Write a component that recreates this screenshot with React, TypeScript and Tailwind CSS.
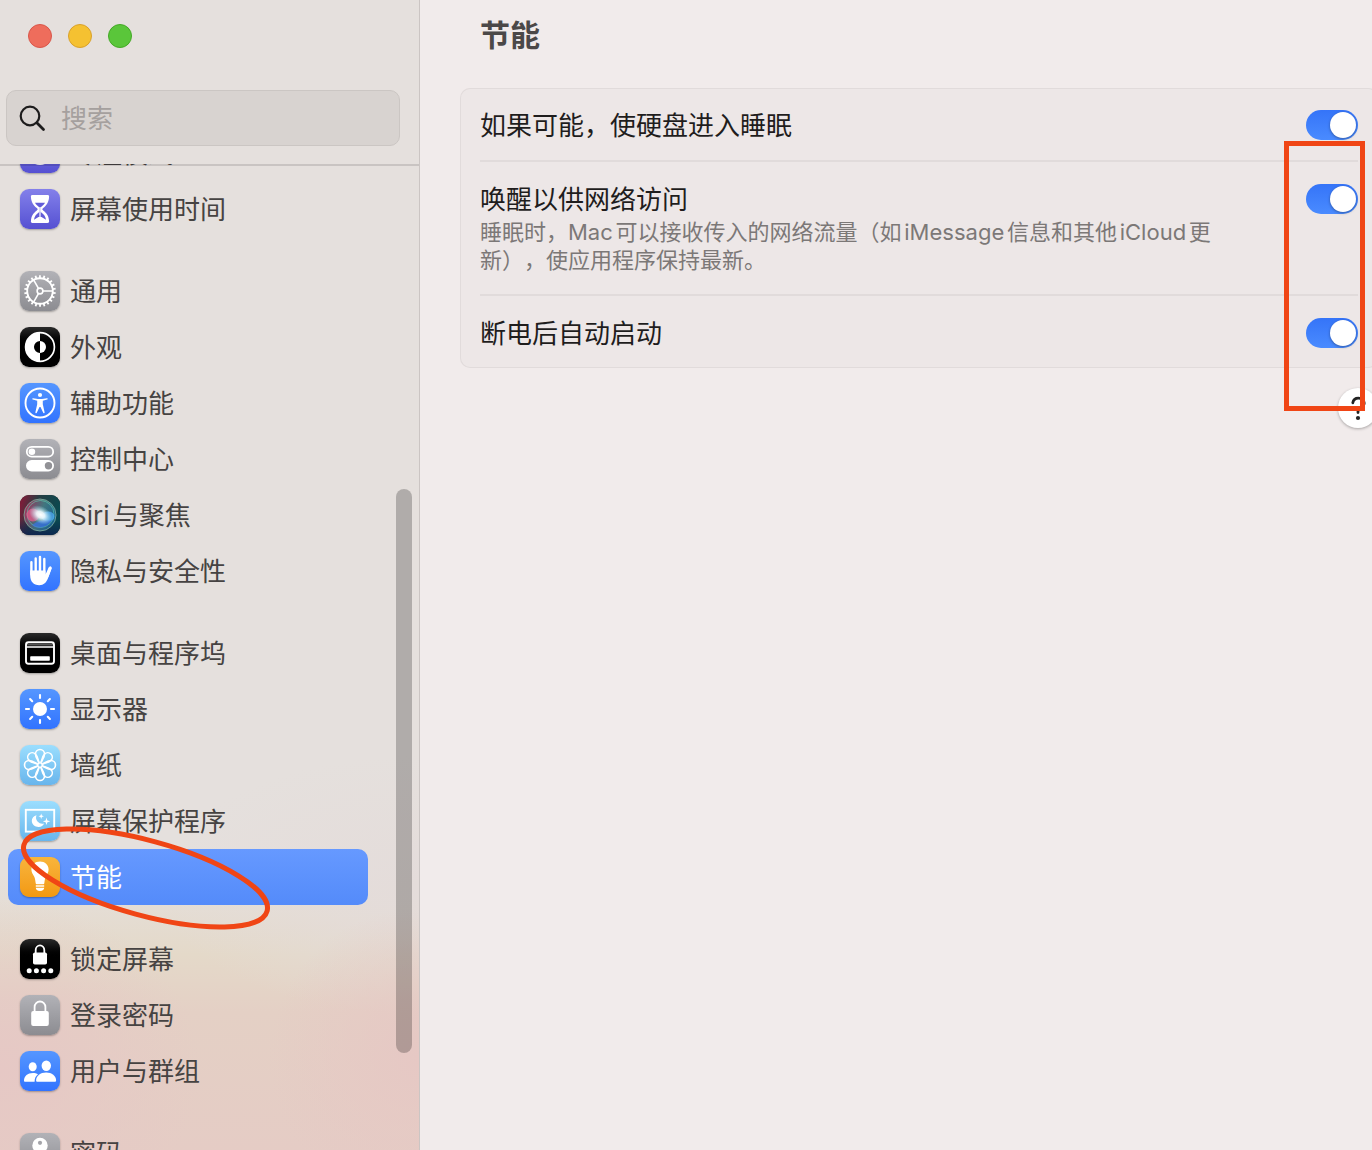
import { useState, type ReactNode } from "react";

type NavItem = {
  label: string;
  tile: string;
  icon: ReactNode;
};

const GRAY = "bg-linear-to-b from-[#b2b2b7] to-[#8c8c91]";
const BLACK = "bg-linear-to-b from-[#2b2b2b] to-black to-50%";
const BLUE = "bg-linear-to-b from-[#5596ff] to-[#3273ff]";
const SKY = "bg-linear-to-b from-[#9bdefe] to-[#68b5ec]";
const INDIGO = "bg-linear-to-b from-[#8480ea] to-[#5650d2]";
const ORANGE = "bg-linear-to-b from-[#f8b53b] to-[#f3990e]";

const spokes = (count: number) => Array.from({ length: count }, (_, i) => (i * 360) / count);

function Glyph({ children }: { children: ReactNode }) {
  return (
    <svg viewBox="0 0 40 40" className="size-10" fill="none" aria-hidden="true">
      {children}
    </svg>
  );
}

const MoonIcon = (
  <Glyph>
    <circle cx="20" cy="20" r="12" fill="white" />
  </Glyph>
);

const HourglassIcon = (
  <Glyph>
    <path
      d="M12.500 6h15c1.100 0 1.700.7 1.600 1.700-.3 5.300-2.200 8.300-5.900 11.300-1.200 1-1.200 1.500 0 2.500 3.700 3 5.600 5.500 5.900 10.800.1 1-.5 1.700-1.600 1.700h-15c-1.100 0-1.700-.7-1.600-1.700.3-5.300 2.200-7.800 5.900-10.800 1.200-1 1.200-1.500 0-2.500-3.700-3-5.600-6-5.900-11.300-.1-1 .5-1.700 1.600-1.700z"
      fill="white"
    />
    <path d="M15 13.700h10c-.9 1.600-2.200 2.900-4.200 4.500-.5.400-.5 4.400 0 4.800 3 2.200 4.600 4.200 5.200 7.700l-4.500-2.800h-3l-4.500 2.800c.6-3.500 2.200-5.500 5.200-7.700.5-.4.500-4.400 0-4.800-2-1.600-3.300-2.900-4.200-4.500z" fill="#625cd8" />
    <path d="M20 18v10" stroke="white" strokeWidth="1.200" />
  </Glyph>
);

const GearIcon = (
  <Glyph>
    <g stroke="white">
      <circle cx="20" cy="20" r="12.800" strokeWidth="1.900" />
      <circle cx="20" cy="20" r="2.900" strokeWidth="1.600" />
      {spokes(3).map((a) => (
        <path key={a} d="M22.800 20H32.500" strokeWidth="1.600" transform={`rotate(${a} 20 20)`} />
      ))}
      {spokes(22).map((a) => (
        <path key={a} d="M33 20h2.800" strokeWidth="1.800" transform={`rotate(${a + 8} 20 20)`} />
      ))}
    </g>
  </Glyph>
);

const AppearanceIcon = (
  <Glyph>
    <circle cx="20" cy="20" r="14.400" stroke="white" strokeWidth="1.700" />
    <path d="M20 5.500a14.500 14.500 0 0 0 0 29v-8.500a6 6 0 0 1 0-12z" fill="white" />
    <path d="M20 14a6 6 0 0 1 0 12z" fill="white" />
  </Glyph>
);

const AccessibilityIcon = (
  <Glyph>
    <circle cx="20" cy="20" r="14.500" stroke="white" strokeWidth="1.900" />
    <circle cx="20" cy="12" r="2.100" fill="white" />
    <path
      d="M13 15.200l5 .8h4l5-.8c.9-.1 1.100 1.200.2 1.400l-4.400 1.100v3.500l1.800 8c.2 1-1.200 1.400-1.500.4L20.500 24h-1l-2.600 5.600c-.3 1-1.700.6-1.500-.4l1.800-8v-3.500l-4.400-1.100c-.9-.2-.7-1.500.2-1.400z"
      fill="white"
    />
  </Glyph>
);

const ControlCenterIcon = (
  <Glyph>
    <rect x="6.800" y="7.800" width="26.400" height="9.800" rx="4.900" stroke="white" strokeWidth="1.800" />
    <circle cx="11.900" cy="12.700" r="3.300" fill="white" />
    <rect x="6" y="21" width="28" height="11.500" rx="5.700" fill="white" />
    <circle cx="28.500" cy="26.700" r="3.700" fill="#919196" />
  </Glyph>
);

const SiriIcon = (
  <Glyph>
    <defs>
      <linearGradient id="siri-bg" x1="0" y1="0" x2="1" y2="0.300">
        <stop offset="0" stopColor="#8e1737" />
        <stop offset="0.450" stopColor="#263c42" />
        <stop offset="1" stopColor="#0b4a50" />
      </linearGradient>
      <linearGradient id="siri-low" x1="0" y1="0" x2="0" y2="1">
        <stop offset="0.600" stopColor="#0b1f50" stopOpacity="0" />
        <stop offset="1" stopColor="#0b1f50" stopOpacity="0.800" />
      </linearGradient>
      <linearGradient id="siri-orb" x1="0" y1="0.300" x2="1" y2="0.700">
        <stop offset="0" stopColor="#d8346e" />
        <stop offset="0.500" stopColor="#5a9aa4" />
        <stop offset="1" stopColor="#1c72b8" />
      </linearGradient>
      <radialGradient id="siri-core">
        <stop offset="0" stopColor="#fff" />
        <stop offset="0.350" stopColor="#f2fdff" stopOpacity="0.900" />
        <stop offset="1" stopColor="#9fe4f4" stopOpacity="0" />
      </radialGradient>
    </defs>
    <rect width="40" height="40" fill="url(#siri-bg)" />
    <rect width="40" height="40" fill="url(#siri-low)" />
    <circle cx="20" cy="20" r="16" fill="url(#siri-orb)" fillOpacity="0.600" stroke="#7fae9c" strokeOpacity="0.800" />
    <circle cx="20.500" cy="19" r="13.500" stroke="#5fd0b0" strokeOpacity="0.600" />
    <ellipse cx="13" cy="20" rx="6.500" ry="6.500" fill="#ee5c8c" fillOpacity="0.700" />
    <ellipse cx="28" cy="21.500" rx="6.500" ry="5" fill="#4fa9f0" fillOpacity="0.750" />
    <path d="M12 30c6 5 15 3 20-5-6 1-11-2-20 5z" fill="#3a72e6" fillOpacity="0.700" />
    <ellipse cx="20.500" cy="19.500" rx="12.500" ry="8.500" fill="url(#siri-core)" transform="rotate(30 20 20)" />
  </Glyph>
);

const HandIcon = (
  <Glyph>
    <g stroke="white" strokeWidth="2.400" strokeLinecap="round">
      <path d="M11.400 11.200v12M15.700 7.500v14M20 6v15M24.300 8v15" />
      <path d="M30.400 16.700l-3 8" strokeWidth="2.700" />
    </g>
    <path
      d="M10.200 19.500h15.300v4l3.400-7.500 2.800 1.200-3.400 9.300c-1.800 5-4.600 7.700-9 7.700-5.800 0-9.100-3.800-9.100-9.700z"
      fill="white"
    />
  </Glyph>
);

const DockIcon = (
  <Glyph>
    <rect x="6" y="9.200" width="28" height="21.600" rx="2.500" stroke="white" strokeWidth="1.900" />
    <path d="M6 14h28" stroke="white" strokeWidth="1.500" />
    <path d="M7 11.800h26" stroke="#555" strokeWidth="1.500" />
    <rect x="10.200" y="23.200" width="19.600" height="4.600" rx="0.800" fill="white" />
  </Glyph>
);

const DisplayIcon = (
  <Glyph>
    <circle cx="20" cy="20" r="7" fill="white" />
    <g stroke="white" strokeWidth="2.100" strokeLinecap="round">
      {spokes(8).map((a) => (
        <path key={a} d="M20 6v3" transform={`rotate(${a} 20 20)`} />
      ))}
    </g>
  </Glyph>
);

const WallpaperIcon = (
  <Glyph>
    <g stroke="white" strokeWidth="1.600">
      {spokes(8).map((a) => (
        <path
          key={a}
          d="M18.500 17.500c.4-2-3-4-3-8.500a4.500 4.500 0 0 1 9 0c0 4.500-3.400 6.500-3 8.500"
          transform={`rotate(${a} 20 20)`}
        />
      ))}
      <circle cx="20" cy="20" r="2.300" />
    </g>
  </Glyph>
);

const ScreenSaverIcon = (
  <Glyph>
    <rect x="5.800" y="8.800" width="28.400" height="21.800" stroke="white" strokeWidth="1.900" />
    <path
      d="M16.500 14.200a6.300 6.300 0 0 0 7.600 8.300 5.900 5.900 0 0 1-5.500 3.400c-3.700 0-6.800-2.500-6.800-6.200 0-2.600 1.900-4.900 4.700-5.500z"
      fill="white"
    />
    <path
      d="M21.200 12.500l.7 2 2 .7-2 .7-.7 2-.7-2-2-.7 2-.7zM26.500 16.500l.9 2.900 2.900.9-2.900.9-.9 2.900-.9-2.900-2.900-.9 2.900-.9z"
      fill="white"
    />
  </Glyph>
);

const BulbIcon = (
  <Glyph>
    <path
      d="M20 4.500c-4.900 0-8.600 3.300-8.600 7.900 0 2.800 1.500 4.800 2.600 6.800s1.300 4.600 1.700 7c.2.700.5 1 1.200 1h6.200c.7 0 1-.3 1.200-1 .4-2.400.6-5 1.700-7s2.600-4 2.600-6.800c0-4.600-3.700-7.900-8.600-7.900z"
      fill="white"
    />
    <path d="M15.800 28.200h8.400v1.500h-8.400zM15.800 30.700h8.400c0 1.900-1.500 3.300-4.200 3.300s-4.200-1.400-4.200-3.300z" fill="white" />
  </Glyph>
);

const LockScreenIcon = (
  <Glyph>
    <path d="M15.700 14v-3a4.300 4.600 0 0 1 8.600 0v3" stroke="white" strokeWidth="1.800" />
    <rect x="13" y="13.500" width="14" height="12" rx="1.800" fill="white" />
    {[9.2, 16.4, 23.6, 30.8].map((x) => (
      <circle key={x} cx={x} cy="31.800" r="2.500" fill="white" />
    ))}
  </Glyph>
);

const LockIcon = (
  <Glyph>
    <path d="M14.600 17v-5a5.400 5.500 0 0 1 10.800 0v5" stroke="white" strokeWidth="1.800" />
    <rect x="11.200" y="16" width="17.600" height="15" rx="2" fill="white" />
  </Glyph>
);

const UsersIcon = (
  <Glyph>
    <ellipse cx="12.700" cy="15.700" rx="4" ry="4.500" fill="white" />
    <ellipse cx="26.300" cy="14.800" rx="4.700" ry="5.200" fill="white" />
    <path d="M4 29.500c0-4.500 3.800-7.500 8.800-7.500 2 0 3.800.5 5.200 1.300-2.200 1.700-3.400 4-3.400 7.500H5.200c-.8 0-1.200-.5-1.200-1.300z" fill="white" />
    <path d="M16.100 29.500c0-4.700 4.300-8 10-8s10 3.300 10 8c0 .8-.5 1.300-1.300 1.300H17.400c-.8 0-1.300-.5-1.300-1.300z" fill="white" />
  </Glyph>
);

const KeyIcon = (
  <Glyph>
    <circle cx="20" cy="12.500" r="7.700" fill="white" />
    <path d="M16.500 18h7v14l-3.500 3-3.500-3z" fill="white" />
    <circle cx="20" cy="9.800" r="2.100" fill="#a5a5aa" />
  </Glyph>
);

const groups: NavItem[][] = [
  [
    { label: "专注模式", tile: INDIGO, icon: MoonIcon },
    { label: "屏幕使用时间", tile: INDIGO, icon: HourglassIcon },
  ],
  [
    { label: "通用", tile: GRAY, icon: GearIcon },
    { label: "外观", tile: BLACK, icon: AppearanceIcon },
    { label: "辅助功能", tile: BLUE, icon: AccessibilityIcon },
    { label: "控制中心", tile: GRAY, icon: ControlCenterIcon },
    { label: "Siri与聚焦", tile: BLACK, icon: SiriIcon },
    { label: "隐私与安全性", tile: BLUE, icon: HandIcon },
  ],
  [
    { label: "桌面与程序坞", tile: BLACK, icon: DockIcon },
    { label: "显示器", tile: BLUE, icon: DisplayIcon },
    { label: "墙纸", tile: SKY, icon: WallpaperIcon },
    { label: "屏幕保护程序", tile: SKY, icon: ScreenSaverIcon },
    { label: "节能", tile: ORANGE, icon: BulbIcon },
  ],
  [
    { label: "锁定屏幕", tile: BLACK, icon: LockScreenIcon },
    { label: "登录密码", tile: GRAY, icon: LockIcon },
    { label: "用户与群组", tile: BLUE, icon: UsersIcon },
  ],
  [{ label: "密码", tile: GRAY, icon: KeyIcon }],
];

const settings = [
  { id: "disk-sleep", label: "如果可能，使硬盘进入睡眠" },
  {
    id: "wake-network",
    label: "唤醒以供网络访问",
    hint: "睡眠时，Mac可以接收传入的网络流量（如iMessage信息和其他iCloud更新），使应用程序保持最新。",
  },
  { id: "auto-start", label: "断电后自动启动" },
];

function NavRow({ item, active }: { item: NavItem; active: boolean }) {
  return (
    <a
      href="#"
      aria-current={active ? "page" : undefined}
      className={`flex h-14 items-center gap-2.5 rounded-[10px] px-3 ${
        active ? "bg-linear-to-b from-[#6699ff] to-[#548bfa] text-white" : "text-[#464342]"
      }`}
    >
      <span className={`size-10 shrink-0 overflow-hidden rounded-[9px] shadow-[0_1px_2px_rgba(0,0,0,0.3)] ${item.tile}`}>
        {item.icon}
      </span>
      <span className="whitespace-nowrap pt-0.5">{item.label}</span>
    </a>
  );
}

function Sidebar() {
  return (
    <aside className="relative flex w-[420px] shrink-0 flex-col border-r border-[#cbc5c3] bg-[radial-gradient(circle_at_100%_92%,#e6c8c4_0,transparent_150px),radial-gradient(ellipse_200px_170px_at_0%_93%,#e6c8c5_0,transparent_100%),radial-gradient(ellipse_260px_130px_at_100%_77%,#e4dcda_0,transparent_100%),linear-gradient(to_bottom,#e5e0dd_76%,#e4d9c9_83%,#e4d0c5_88%,#e5ccc5_100%)]">
      <header className="flex h-[164px] shrink-0 flex-col gap-[42px] pt-6">
        <div className="flex gap-4 pl-7">
          <button aria-label="关闭" className="size-6 rounded-full border border-[#d9564a] bg-[#ee6d5c]" />
          <button aria-label="最小化" className="size-6 rounded-full border border-[#d9a12b] bg-[#f5c131]" />
          <button aria-label="缩放" className="size-6 rounded-full border border-[#44a926] bg-[#5ac63a]" />
        </div>
        <label className="ml-1.5 mr-[19px] flex h-14 items-center gap-3.5 rounded-[10px] border border-[#cbc6c3] bg-[#d8d3d0] pl-3">
          <svg viewBox="0 0 28 28" className="size-7 shrink-0" fill="none" stroke="#1d1c1c" aria-hidden="true">
            <circle cx="11" cy="12" r="9.300" strokeWidth="2.200" />
            <path d="M17.800 18.800l6.700 6.700" strokeWidth="2.800" strokeLinecap="round" />
          </svg>
          <input
            type="text"
            aria-label="搜索"
            placeholder="搜索"
            className="min-w-0 flex-1 bg-transparent pt-0.5 outline-none placeholder:text-[#a5a09e]"
          />
        </label>
      </header>
      <hr className="relative z-10 -mb-0.5 h-0.5 shrink-0 border-0 bg-black/12" />
      <nav className="min-h-0 flex-1 overflow-hidden pl-2 pr-[51px]">
        <div className="-mt-[39px] flex flex-col gap-[26px]">
          {groups.map((group) => (
            <div key={group[0].label}>
              {group.map((item) => (
                <NavRow key={item.label} item={item} active={item.label === "节能"} />
              ))}
            </div>
          ))}
        </div>
      </nav>
      {/* Scroll thumb */}
      <div className="absolute right-[7px] top-[489px] h-[564px] w-4 rounded-full bg-black/23" />
      {/* Hand-drawn marker around the active row */}
      <svg viewBox="0 0 260 110" className="pointer-events-none absolute left-4 top-[823px] z-20 h-[110px] w-[260px]" aria-hidden="true">
        <ellipse cx="129.500" cy="55" rx="126" ry="37.500" transform="rotate(15.200 129.500 55)" fill="none" stroke="#f04515" strokeWidth="5" />
      </svg>
    </aside>
  );
}

function SettingRow({ id, label, hint }: { id: string; label: string; hint?: string }) {
  const [on, setOn] = useState(true);
  return (
    <div className="flex items-start justify-between gap-6 pb-[18px] pt-[22px]">
      <div>
        <label htmlFor={id} className="block leading-8 text-[#1f1d1d]">
          {label}
        </label>
        {hint && <p className="max-w-[760px] py-0.5 text-[22px] leading-7 text-[#7c7877]">{hint}</p>}
      </div>
      <input
        id={id}
        type="checkbox"
        role="switch"
        checked={on}
        onChange={() => setOn(!on)}
        className="flex h-[30px] w-[52px] shrink-0 appearance-none items-center rounded-full bg-[#d5d0d0] p-0.5 before:block before:size-[26px] before:rounded-full before:bg-white before:shadow-[0_1px_3px_rgba(0,0,0,0.35)] checked:justify-end checked:bg-linear-to-b checked:from-[#3574f8] checked:to-[#4a8bff]"
      />
    </div>
  );
}

export default function App() {
  return (
    <div
      lang="zh-CN"
      className="flex h-screen overflow-hidden bg-[#f1ebeb] font-['Inter','Noto_Sans_CJK_SC',sans-serif] text-[26px] leading-[38px] [text-autospace:normal] [text-spacing-trim:space-all]"
    >
      <Sidebar />
      <main className="relative min-w-0 flex-1 overflow-hidden pl-10">
        <h1 className="flex h-[88px] items-start pl-5 pt-4 text-[30px] font-bold leading-[38px] text-[#4b4848]">节能</h1>
        {/* The pane runs slightly past the right edge of the window */}
        <div className="-mr-1.5 flex flex-col gap-5">
          <section className="divide-y-2 divide-[#e1dbdb] rounded-[10px] bg-[#ede7e7] px-5 shadow-[inset_0_0_0_1px_#e1dbdb]">
            {settings.map((s) => (
              <SettingRow key={s.id} {...s} />
            ))}
          </section>
          <button
            aria-label="帮助"
            className="flex size-10 items-center justify-center self-end rounded-full bg-white text-[#222] shadow-[0_1px_3px_rgba(0,0,0,0.3)]"
          >
            <svg viewBox="0 0 40 40" className="size-10" fill="none" stroke="currentColor" aria-hidden="true">
              <path d="M14.800 14.800c.5-3 2.500-4.700 5.600-4.700 3.300 0 5.800 1.900 5.800 4.900 0 4.200-6.200 4.300-6.200 8.500v1" strokeWidth="2.800" strokeLinecap="round" />
              <circle cx="20" cy="30" r="2.100" fill="currentColor" stroke="none" />
            </svg>
          </button>
        </div>
        <div className="pointer-events-none absolute right-[7px] top-[141px] h-[270px] w-[81px] border-5 border-[#f04515]" />
      </main>
    </div>
  );
}
